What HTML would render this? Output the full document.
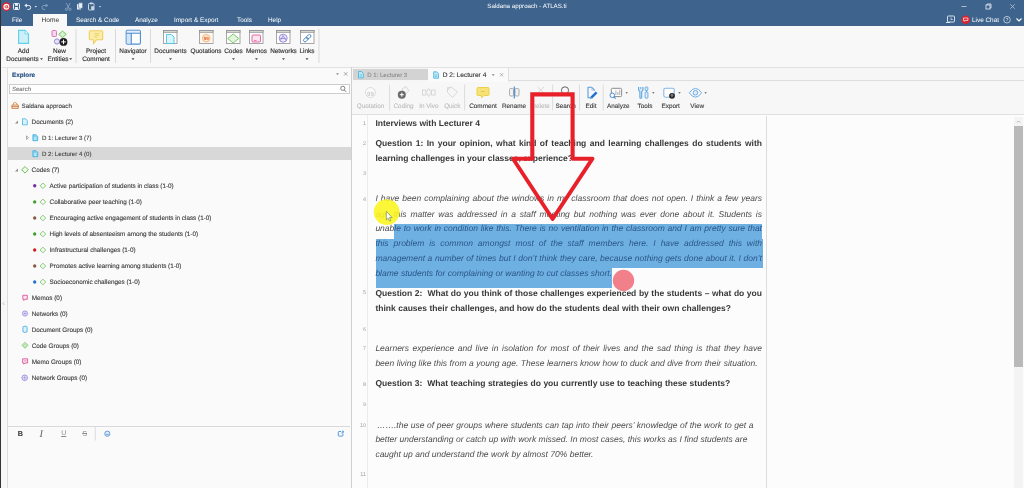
<!DOCTYPE html>
<html>
<head>
<meta charset="utf-8">
<title>Saldana approach - ATLAS.ti</title>
<style>
html,body{margin:0;padding:0;}
body{will-change:transform;text-rendering:geometricPrecision;width:1024px;height:488px;overflow:hidden;position:relative;background:#f7f7f7;font-family:"Liberation Sans",sans-serif;font-size:7px;color:#333;}
.abs{position:absolute;}
.t{position:absolute;white-space:nowrap;line-height:10px;margin-top:1.1px;}
#titlebar{left:0;top:0;width:1024px;height:26px;background:#3e648e;}
#leftedge{left:0;top:0;width:1.3px;height:488px;background:#333;}
.tab{color:#fff;font-size:6.4px;top:14.9px;}
#hometab{left:33px;top:14px;width:34px;height:13px;background:#f8f8f8;}
#ribbon{left:2px;top:26px;width:1022px;height:41px;background:#f8f8f8;border-bottom:1px solid #e2e2e2;}
.rl{-webkit-text-stroke:0.15px #333;font-size:6.4px;color:#333;text-align:center;line-height:8px;}
.vsep{position:absolute;width:1px;background:#d8d8d8;}
/* left panel */
#lp{left:7px;top:68px;width:344px;height:420px;background:#fafafa;border-left:1px solid #dcdcdc;}
.tr{-webkit-text-stroke:0.12px;position:absolute;margin-top:1.1px;font-size:6.35px;color:#444;white-space:nowrap;line-height:10px;}
/* doc */
#dp{left:352px;top:68px;width:672px;height:420px;background:#f6f6f6;}
.dl{position:absolute;font-size:8.5px;line-height:12px;height:12px;color:#333;white-space:nowrap;text-align:justify;text-align-last:justify;}
.dl.b{font-weight:bold;color:#383838;}
.dl.i{font-style:italic;color:#4d4d4d;}
.dl.s,.dl .s{color:#2a5589;}
.ln{position:absolute;margin-top:1.2px;left:353px;width:13px;text-align:right;font-size:5.5px;color:#a2a2a2;line-height:8px;height:8px;}
</style>
</head>
<body>
<div class="abs" id="titlebar"></div>
<div class="abs" id="hometab"></div>
<div class="abs" id="ribbon"></div>
<div class="abs" id="lp"></div>
<div class="abs" id="dp"></div>

<!-- title bar content -->
<svg class="abs" style="left:0.3px;top:1px" width="120" height="14" viewBox="0 0 120 14">
  <circle cx="6.400" cy="5.700" r="3.700" fill="#fff" stroke="#de1f2d" stroke-width="1.400"/>
  <circle cx="6.200" cy="5.800" r="1.150" fill="none" stroke="#de1f2d" stroke-width="0.800"/>
  <path d="M7.500 4.400v2.300q0.500 0.600 1.100 0" fill="none" stroke="#de1f2d" stroke-width="0.700"/>
  <!-- save -->
  <rect x="13.5" y="2.5" width="6" height="6" rx="0.8" fill="none" stroke="#e8eef5" stroke-width="1"/>
  <rect x="15" y="2.8" width="3" height="2" fill="#e8eef5"/>
  <rect x="15" y="6" width="3" height="2.4" fill="#e8eef5"/>
  <!-- undo -->
  <path d="M25.5 4.5h3.2a2 2 0 0 1 0 4h-1.2" fill="none" stroke="#e8eef5" stroke-width="1"/>
  <path d="M24.3 4.5l2.6-2v4z" fill="#e8eef5"/>
  <path d="M34.5 5l1.3 1.4 1.3-1.4z" fill="#dfe6ef"/>
  <!-- redo (dim) -->
  <path d="M47 4.5h-3a2 2 0 0 0 0 4h1.2" fill="none" stroke="#7f9cbd" stroke-width="1"/>
  <path d="M48.3 4.5l-2.6-2v4z" fill="#7f9cbd"/>
  <!-- cut (dim) -->
  <g transform="translate(0.700,0)"><path d="M65.5 2l3 5.5M69.5 2l-3 5.5" stroke="#8ea8c6" stroke-width="0.8" fill="none"/>
  <circle cx="65.7" cy="8.3" r="1.1" fill="none" stroke="#8ea8c6" stroke-width="0.8"/>
  <circle cx="69.3" cy="8.3" r="1.1" fill="none" stroke="#8ea8c6" stroke-width="0.8"/></g>
  <!-- copy -->
  <rect x="77" y="3" width="4" height="5.5" rx="0.6" fill="#e8eef5"/>
  <rect x="78.6" y="1.8" width="4" height="5.5" rx="0.6" fill="#e8eef5" stroke="#3e648e" stroke-width="0.5"/>
  <!-- paste -->
  <rect x="88.5" y="2.5" width="5.5" height="6.5" rx="0.8" fill="none" stroke="#cfd9e6" stroke-width="1"/>
  <rect x="90" y="1.5" width="2.5" height="1.8" fill="#cfd9e6"/>
  <rect x="91" y="5" width="3.5" height="4.2" fill="#cfd9e6" stroke="#3e648e" stroke-width="0.4"/>
  <path d="M98.7 5l1.3 1.4 1.3-1.4z" fill="#b9c8da"/>
</svg>
<div class="t" style="left:427px;width:200px;text-align:center;top:1.2px;color:#fff;font-size:6.2px;">Saldana approach - ATLAS.ti</div>
<svg class="abs" style="left:940px;top:0" width="84" height="26" viewBox="0 0 84 26">
  <path d="M21.5 6.5h5" stroke="#c9d5e3" stroke-width="0.8"/>
  <rect x="46" y="5" width="4" height="4" fill="none" stroke="#e8eef5" stroke-width="0.8"/>
  <path d="M47 5v-1h4v4h-1" fill="none" stroke="#e8eef5" stroke-width="0.8"/>
  <path d="M70.3 4.3l4.4 4.4M74.7 4.3l-4.4 4.4" stroke="#b9c8da" stroke-width="0.8"/>
  <!-- row 2 -->
  <rect x="7.5" y="16" width="7" height="6" rx="0.8" fill="none" stroke="#e8eef5" stroke-width="0.9"/>
  <path d="M11 17.5v2h1.8" fill="none" stroke="#e8eef5" stroke-width="0.7"/>
  <path d="M6 22.5h4" stroke="#e8eef5" stroke-width="0.9"/>
  <circle cx="25.7" cy="19.7" r="4.3" fill="#d8232e"/>
  <path d="M23.5 18h4.4v2.4h-2.6l-0.9 1v-1h-0.9z" fill="none" stroke="#fff" stroke-width="0.7"/>
  <circle cx="67" cy="19.7" r="3.3" fill="none" stroke="#dfe7f0" stroke-width="0.7"/>
  <path d="M66 18.7q1-1.2 2 0q0 .8-1 1.3v0.6" fill="none" stroke="#dfe7f0" stroke-width="0.6"/>
  <path d="M76.5 18.5l2.5 2.5 2.5-2.5" fill="none" stroke="#fff" stroke-width="1.1"/>
</svg>
<div class="t" style="left:972px;top:15px;color:#fff;font-size:6.4px;">Live Chat</div>
<div class="t tab" style="left:12px;">File</div>
<div class="t tab" style="left:41.500px;color:#333;font-size:6.600px;">Home</div>
<div class="t tab" style="left:76px;">Search &amp; Code</div>
<div class="t tab" style="left:135px;">Analyze</div>
<div class="t tab" style="left:174px;">Import &amp; Export</div>
<div class="t tab" style="left:237px;">Tools</div>
<div class="t tab" style="left:268px;">Help</div>
<!-- ribbon content -->
<svg class="abs" style="left:0;top:0" width="330" height="66" viewBox="0 0 330 66">
<path d="M18.600 30.400h6.400l3.500 3.500v9.500h-9.900z" fill="#cdf0f8" stroke="#62d0e8" stroke-width="1.200" stroke-linejoin="round"/><path d="M25 30.400v3.500h3.500" fill="#e8f9fc" stroke="#62d0e8" stroke-width="0.800"/><rect x="52" y="30.5" width="4.5" height="6" rx="1" fill="#f6d8ec" stroke="#d66bb4" stroke-width="0.9"/><path d="M62.5 31l3.8 3.3-3.8 3.3-3.8-3.3z" fill="#d9f0d0" stroke="#6cbf5a" stroke-width="0.9"/><circle cx="57" cy="41.5" r="2.6" fill="#e6e0f7" stroke="#8f7fd6" stroke-width="0.9"/><circle cx="63.500" cy="41.900" r="3.900" fill="#1e1e1e"/><path d="M61.200 41.900h4.600M63.500 39.600v4.600" stroke="#fff" stroke-width="1"/><path d="M90.300 30.800h11.400a1 1 0 0 1 1 1v7a1 1 0 0 1-1 1h-5.200l-3 3.600v-3.600h-3.200a1 1 0 0 1-1-1v-7a1 1 0 0 1 1-1z" fill="#faedaa" stroke="#f0d060" stroke-width="1.100"/><path d="M94.500 33.500h4.500M94.500 35.300h4.500M94.500 37.100h2.800" stroke="#ecc840" stroke-width="0.700"/><rect x="126.200" y="30.300" width="14.200" height="13.800" rx="1.200" fill="#fff" stroke="#4f8dcf" stroke-width="1.100"/><rect x="126.800" y="33.300" width="4.200" height="10.300" fill="#d3e5f6"/><rect x="126.800" y="30.900" width="13" height="2" fill="#e3eefa"/><path d="M126.200 33.300h14.200M131.300 33.300v10.800" stroke="#4f8dcf" stroke-width="1.100"/><g transform="translate(163,30)"><rect x="0.5" y="0.5" width="13.5" height="13" fill="#fff" stroke="#9c9c9c" stroke-width="0.9"/><rect x="0.5" y="0.5" width="13.5" height="1.8" fill="#dcdcdc" stroke="#909090" stroke-width="0.8"/><path d="M3.5 4.500h5l2.500 2.500v6.500h-7.500z" fill="#d8f3f9" stroke="#4cc3e3" stroke-width="0.9"/></g><g transform="translate(199,30)"><rect x="0.5" y="0.5" width="13.5" height="13" fill="#fff" stroke="#9c9c9c" stroke-width="0.9"/><rect x="0.5" y="0.5" width="13.5" height="1.8" fill="#dcdcdc" stroke="#909090" stroke-width="0.8"/><rect x="1" y="3" width="12.500" height="10" fill="#fdf6ef"/><circle cx="7.200" cy="8.200" r="3.700" fill="#fdecd9" stroke="#f5a45e" stroke-width="0.800"/><text x="7.200" y="10" font-size="4.600" font-weight="bold" text-anchor="middle" fill="#e8622a" font-family="Liberation Sans, sans-serif">99</text></g><g transform="translate(226,30)"><rect x="0.5" y="0.5" width="13.5" height="13" fill="#fff" stroke="#9c9c9c" stroke-width="0.9"/><rect x="0.5" y="0.5" width="13.5" height="1.8" fill="#dcdcdc" stroke="#909090" stroke-width="0.8"/><path d="M7.200 4l5.500 4.500-5.500 4.500-5.500-4.500z" fill="#e4f4dd" stroke="#6cbf5a" stroke-width="0.9"/></g><g transform="translate(249,30)"><rect x="0.5" y="0.5" width="13.5" height="13" fill="#fff" stroke="#9c9c9c" stroke-width="0.9"/><rect x="0.5" y="0.5" width="13.5" height="1.8" fill="#dcdcdc" stroke="#909090" stroke-width="0.8"/><rect x="3" y="5" width="8.500" height="7" rx="1" fill="#fbe3ef" stroke="#e2589a" stroke-width="0.9"/><path d="M5 10.500h2.500" stroke="#e2589a" stroke-width="0.7"/></g><g transform="translate(276,30)"><rect x="0.5" y="0.5" width="13.5" height="13" fill="#fff" stroke="#9c9c9c" stroke-width="0.9"/><rect x="0.5" y="0.5" width="13.5" height="1.8" fill="#dcdcdc" stroke="#909090" stroke-width="0.8"/><circle cx="7.200" cy="8.200" r="4" fill="#efeafb" stroke="#7f74d6" stroke-width="0.8"/><path d="M4.500 10.500l2.500-5 3 5M4 8.500h6" stroke="#7f74d6" stroke-width="0.7" fill="none"/></g><g transform="translate(300,30)"><rect x="0.5" y="0.5" width="13.5" height="13" fill="#fff" stroke="#9c9c9c" stroke-width="0.9"/><rect x="0.5" y="0.5" width="13.5" height="1.8" fill="#dcdcdc" stroke="#909090" stroke-width="0.8"/><g transform="rotate(-45 7.200 8.200)" fill="none" stroke="#3f7fc4" stroke-width="0.900"><rect x="2.600" y="6.700" width="5.200" height="3" rx="1.500"/><rect x="6.600" y="6.700" width="5.200" height="3" rx="1.500"/></g></g><path d="M40 58.2h3l-1.500 1.800z" fill="#444"/><path d="M69.200 58.200h3l-1.500 1.800z" fill="#444"/><path d="M131.5 58.2h3l-1.5 1.8z" fill="#444"/><path d="M169.0 58.2h3l-1.5 1.8z" fill="#444"/><path d="M232.0 58.2h3l-1.5 1.8z" fill="#444"/><path d="M255.0 58.2h3l-1.5 1.8z" fill="#444"/><path d="M282.0 58.2h3l-1.5 1.8z" fill="#444"/><path d="M305.5 58.2h3l-1.5 1.8z" fill="#444"/><path d="M76 29v34" stroke="#d9d9d9" stroke-width="1"/><path d="M115.5 29v34" stroke="#d9d9d9" stroke-width="1"/><path d="M150.5 29v34" stroke="#d9d9d9" stroke-width="1"/><path d="M319 29v34" stroke="#d9d9d9" stroke-width="1"/></svg>
<div class="t rl" style="left:-6.5px;width:60px;top:46.7px;">Add</div>
<div class="t rl" style="left:-7.5px;width:60px;top:54.5px;">Documents</div>
<div class="t rl" style="left:29.5px;width:60px;top:46.7px;">New</div>
<div class="t rl" style="left:28.0px;width:60px;top:54.5px;">Entities</div>
<div class="t rl" style="left:66.0px;width:60px;top:46.7px;">Project</div>
<div class="t rl" style="left:66.0px;width:60px;top:54.5px;">Comment</div>
<div class="t rl" style="left:103.0px;width:60px;top:46.7px;">Navigator</div>
<div class="t rl" style="left:140.5px;width:60px;top:46.7px;">Documents</div>
<div class="t rl" style="left:176.0px;width:60px;top:46.7px;">Quotations</div>
<div class="t rl" style="left:203.5px;width:60px;top:46.7px;">Codes</div>
<div class="t rl" style="left:226.5px;width:60px;top:46.7px;">Memos</div>
<div class="t rl" style="left:253.5px;width:60px;top:46.7px;">Networks</div>
<div class="t rl" style="left:277.0px;width:60px;top:46.7px;">Links</div>
<!-- left panel content -->
<div class="abs" style="left:8px;top:147px;width:343px;height:13px;background:#d8d8d8;"></div>
<div class="tr" style="left:12px;top:70px;color:#1f4a80;font-weight:bold;font-size:6.3px;">Explore</div>
<div class="abs" style="left:9px;top:84px;width:340.5px;height:10px;background:#fff;border:1px solid #cdcdcd;box-sizing:border-box;"></div>
<div class="tr" style="left:12px;top:83.5px;color:#777;font-style:italic;font-size:6px;">Search</div>
<div class="tr" style="left:21.6px;top:101px;color:#444;font-size:6.2px;">Saldana approach</div>
<div class="tr" style="left:31.6px;top:117.3px;color:#3a3a3a;">Documents (2)</div>
<div class="tr" style="left:42px;top:133.2px;color:#444;font-size:6.1px;">D 1: Lecturer 3 (7)</div>
<div class="tr" style="left:42px;top:149.2px;color:#444;font-size:6.1px;">D 2: Lecturer 4 (0)</div>
<div class="tr" style="left:31.6px;top:165.2px;color:#3a3a3a;">Codes (7)</div>
<div class="tr" style="left:49.6px;top:181.3px;color:#3a3a3a;">Active participation of students in class (1-0)</div>
<div class="tr" style="left:49.6px;top:197.4px;color:#3a3a3a;">Collaborative peer teaching (1-0)</div>
<div class="tr" style="left:49.6px;top:212.9px;color:#3a3a3a;">Encouraging active engagement of students in class (1-0)</div>
<div class="tr" style="left:49.6px;top:228.9px;color:#3a3a3a;">High levels of absenteeism among the students (1-0)</div>
<div class="tr" style="left:49.6px;top:244.9px;color:#3a3a3a;">Infrastructural challenges (1-0)</div>
<div class="tr" style="left:49.6px;top:260.9px;color:#3a3a3a;">Promotes active learning among students (1-0)</div>
<div class="tr" style="left:49.6px;top:276.9px;color:#3a3a3a;">Socioeconomic challenges (1-0)</div>
<div class="tr" style="left:31.7px;top:292.9px;color:#3a3a3a;">Memos (0)</div>
<div class="tr" style="left:31.7px;top:308.9px;color:#3a3a3a;">Networks (0)</div>
<div class="tr" style="left:31.7px;top:325px;color:#3a3a3a;">Document Groups (0)</div>
<div class="tr" style="left:31.7px;top:340.7px;color:#3a3a3a;">Code Groups (0)</div>
<div class="tr" style="left:31.7px;top:356.9px;color:#3a3a3a;">Memo Groups (0)</div>
<div class="tr" style="left:31.7px;top:373.3px;color:#3a3a3a;">Network Groups (0)</div>
<svg class="abs" style="left:0;top:66px" width="352" height="422" viewBox="0 66 352 422">
<path d="M336 73.300h3l-1.500 1.800z" fill="#888"/><path d="M344 72.200l3.400 3.400M347.400 72.200l-3.400 3.400" stroke="#888" stroke-width="0.700"/><circle cx="342.800" cy="88.300" r="2.100" fill="none" stroke="#666" stroke-width="0.800"/><path d="M344.300 89.900l1.900 2" stroke="#666" stroke-width="0.900"/><g transform="translate(2.100,-0.500)"><path d="M9.800 105.500h6.400v3.500h-6.400z" fill="#f9ead0" stroke="#c9803a" stroke-width="0.800"/><path d="M11 105.500a2 2.500 0 0 1 4 0" fill="none" stroke="#c9803a" stroke-width="0.800"/><path d="M9.500 107.200h7" stroke="#c0503a" stroke-width="0.700"/></g><path d="M18.0 120.5v3h-3z" fill="#8c8c8c"/><path d="M22.5 118.8h3l1.800 1.800v4.200h-4.800z" fill="#d8f3f9" stroke="#3fb4dc" stroke-width="0.800"/><path d="M26.5 135.89999999999998l2 1.800-2 1.800z" fill="none" stroke="#777" stroke-width="0.600"/><path d="M32.900000000000006 134.7h3l1.800 1.800v4.200h-4.800z" fill="#86d3ef" stroke="#35b0dd" stroke-width="0.800"/><path d="M33.9 137.9h2.600M33.9 139.3h2.600" stroke="#fff" stroke-width="0.600"/><path d="M32.900000000000006 150.7h3l1.800 1.800v4.200h-4.800z" fill="#86d3ef" stroke="#35b0dd" stroke-width="0.800"/><path d="M33.9 153.9h2.600M33.9 155.3h2.600" stroke="#fff" stroke-width="0.600"/><path d="M18.0 168.5v3h-3z" fill="#8c8c8c"/><path d="M25 166.500l3.300 3.300-3.300 3.300-3.300-3.300z" fill="#f1faec" stroke="#6cbf5a" stroke-width="1" stroke-linejoin="round"/><circle cx="34.700" cy="185.8" r="1.700" fill="#7b2fa0"/><path d="M42.9 183.0l2.800 2.800-2.800 2.800-2.800-2.800z" fill="#f1faec" stroke="#6cbf5a" stroke-width="0.800"/><circle cx="34.700" cy="201.9" r="1.700" fill="#3f9e2f"/><path d="M42.9 199.1l2.800 2.800-2.800 2.800-2.800-2.800z" fill="#f1faec" stroke="#6cbf5a" stroke-width="0.800"/><circle cx="34.700" cy="218" r="1.700" fill="#8a5a44"/><path d="M42.9 215.2l2.800 2.800-2.800 2.800-2.800-2.800z" fill="#f1faec" stroke="#6cbf5a" stroke-width="0.800"/><circle cx="34.700" cy="234" r="1.700" fill="#3f9e2f"/><path d="M42.9 231.2l2.800 2.800-2.800 2.800-2.800-2.800z" fill="#f1faec" stroke="#6cbf5a" stroke-width="0.800"/><circle cx="34.700" cy="250" r="1.700" fill="#cc1f1f"/><path d="M42.9 247.2l2.800 2.800-2.800 2.800-2.800-2.800z" fill="#f1faec" stroke="#6cbf5a" stroke-width="0.800"/><circle cx="34.700" cy="266" r="1.700" fill="#8a5a44"/><path d="M42.9 263.2l2.800 2.800-2.800 2.800-2.800-2.800z" fill="#f1faec" stroke="#6cbf5a" stroke-width="0.800"/><circle cx="34.700" cy="282" r="1.700" fill="#2a6fd6"/><path d="M42.9 279.2l2.800 2.800-2.800 2.800-2.800-2.800z" fill="#f1faec" stroke="#6cbf5a" stroke-width="0.800"/><g transform="translate(0.300,-0.700)"><path d="M22.500 295.500h4.500v4h-2.500l-1 1.200v-1.200h-1z" fill="#fbe3ef" stroke="#d6478f" stroke-width="0.800" transform="translate(0,0.500)"/><circle cx="24.700" cy="314.200" r="2.600" fill="#efeafb" stroke="#7f74d6" stroke-width="0.700"/><path d="M23 314.200h3.400M24.700 312.500v3.400" stroke="#7f74d6" stroke-width="0.500"/><rect x="22.600" y="327" width="4.200" height="6" rx="1.200" fill="#d8f3f9" stroke="#3fa4dc" stroke-width="0.800"/><path d="M24.700 343l3 3-3 3-3-3z" fill="#e4f4dd" stroke="#6cbf5a" stroke-width="0.800"/><path d="M24.700 344.500l1.500 1.500-1.500 1.500-1.500-1.500z" fill="none" stroke="#6cbf5a" stroke-width="0.500"/><path d="M22.300 359.500h5v4.200h-2.800l-1 1.200v-1.200h-1.200z" fill="#fbe3ef" stroke="#d6478f" stroke-width="0.800"/><path d="M24 361.500h2" stroke="#d6478f" stroke-width="0.600"/></g><circle cx="24.700" cy="377.800" r="2.800" fill="#efeafb" stroke="#7f74d6" stroke-width="0.700"/><path d="M22.500 377.800h4.400M24.700 375.500v4.500" stroke="#7f74d6" stroke-width="0.500"/><path d="M8 426.500h342" stroke="#d9d9d9" stroke-width="1"/><path d="M95.300 427v13.500" stroke="#dcdcdc" stroke-width="1"/><circle cx="107.300" cy="433.700" r="2.600" fill="#dfeaf8" stroke="#5a98d8" stroke-width="0.900"/><path d="M105.900 434.400h2.800" stroke="#5a98d8" stroke-width="0.800"/><rect x="338.300" y="431.500" width="4.600" height="4.600" rx="0.800" fill="none" stroke="#2f7fd0" stroke-width="0.800"/><path d="M341 431.200h2.300v2.300" fill="none" stroke="#fafafa" stroke-width="1.600"/><path d="M341.200 433.500l2-2M341.800 431.200h1.600v1.600" fill="none" stroke="#2f7fd0" stroke-width="0.700"/><path d="M4.300 302.300l-1.300 1.300 1.300 1.300" fill="none" stroke="#999" stroke-width="0.600"/></svg>
<div class="tr" style="left:17.800px;top:428px;font-weight:bold;color:#3a3a3a;font-size:7.200px;">B</div>
<div class="tr" style="left:39.500px;top:429.400px;font-style:italic;color:#666;font-size:10.500px;font-family:'Liberation Serif',serif;-webkit-text-stroke:0;">I</div>
<div class="tr" style="left:61.200px;top:428px;text-decoration:underline;color:#8a8a8a;font-size:7px;-webkit-text-stroke:0;">U</div>
<div class="tr" style="left:82.200px;top:428px;text-decoration:line-through;color:#8a8a8a;font-size:7.200px;-webkit-text-stroke:0;">S</div>
<!-- document panel -->
<div class="abs" style="left:352.6px;top:69.3px;width:75px;height:11px;background:#d3d3d3;"></div>
<div class="abs" style="left:427.6px;top:68px;width:80.4px;height:14px;background:#fafafa;border-right:1px solid #dedede;"></div>
<div class="abs" style="left:509px;top:80px;width:515px;height:1px;background:#dedede;"></div>
<div class="abs" style="left:352px;top:82px;width:672px;height:32px;background:#f7f7f7;"></div>

<div class="abs" style="left:352px;top:114px;width:672px;height:374px;background:#fcfcfc;border-top:1px solid #e1e1e1;"></div>
<div class="abs" style="left:351.2px;top:67px;width:1px;height:421px;background:#cfcfcf;"></div>
<div class="abs" style="left:367px;top:115px;width:1px;height:373px;background:#ececec;"></div>
<div class="abs" style="left:766px;top:116px;width:1px;height:372px;background:#dcdcdc;"></div>
<div class="abs" style="left:1014px;top:117px;width:9px;height:371px;background:#f4f4f4;"></div>
<div class="abs" style="left:1014px;top:126px;width:8.5px;height:241px;background:#b9b9b9;"></div>
<svg class="abs" style="left:1014px;top:117px" width="9" height="9"><path d="M3 5.500l1.500-1.500 1.500 1.500" fill="none" stroke="#999" stroke-width="0.700"/></svg>
<div class="abs" style="left:394.3px;top:223.8px;width:368.2px;height:15px;background:#6fb0e2;"></div>
<div class="abs" style="left:375.5px;top:238.5px;width:387px;height:29px;background:#6fb0e2;"></div>
<div class="abs" style="left:375.5px;top:267px;width:236.3px;height:21.3px;background:#6fb0e2;"></div>
<div class="dl b" style="left:375.4px;width:104.6px;top:117.2px;">Interviews with Lecturer 4</div>
<div class="dl b" style="left:375.4px;width:386.6px;top:137.4px;">Question 1: In your opinion, what kind of teaching and learning challenges do students with</div>
<div class="dl b" style="left:375.4px;width:196.8px;top:151.6px;">learning challenges in your classes, experience?</div>
<div class="dl i" style="left:375.4px;width:386.6px;top:192.4px;">I have been complaining about the windows in my classroom that does not open. I think a few years</div>
<div class="dl i" style="left:375.4px;width:386.6px;top:207.7px;">ago this matter was addressed in a staff meeting but nothing was ever done about it. Students is</div>
<div class="dl i" style="left:375.4px;width:386.6px;top:222.4px;">unab<span class="s">le to work in condition like this. There is no ventilation in the classroom and I am pretty sure that</span></div>
<div class="dl i s" style="left:375.4px;width:386.6px;top:237.2px;">this problem is common amongst most of the staff members here. I have addressed this with</div>
<div class="dl i s" style="left:375.4px;width:386.6px;top:251.9px;">management a number of times but I don&rsquo;t think they care, because nothing gets done about it. I don&rsquo;t</div>
<div class="dl i s" style="left:375.4px;width:235.6px;top:266.7px;">blame students for complaining or wanting to cut classes short.</div>
<div class="dl b" style="left:375.4px;width:386.6px;top:286.7px;">Question 2:&nbsp; What do you think of those challenges experienced by the students &ndash; what do you</div>
<div class="dl b" style="left:375.4px;width:355.6px;top:302.2px;">think causes their challenges, and how do the students deal with their own challenges?</div>
<div class="dl i" style="left:375.4px;width:386.6px;top:342.1px;">Learners experience and live in isolation for most of their lives and the sad thing is that they have</div>
<div class="dl i" style="left:375.4px;width:382.3px;top:356.7px;">been living like this from a young age. These learners know how to duck and dive from their situation.</div>
<div class="dl b" style="left:375.4px;width:354.8px;top:377.4px;">Question 3:&nbsp; What teaching strategies do you currently use to teaching these students?</div>
<div class="dl i" style="left:377px;width:376.4px;top:419.1px;">&hellip;&hellip;.the use of peer groups where students can tap into their peers&rsquo; knowledge of the work to get a</div>
<div class="dl i" style="left:375.4px;width:372.0px;top:433.2px;">better understanding or catch up with work missed. In most cases, this works as I find students are</div>
<div class="dl i" style="left:375.4px;width:218.1px;top:447.8px;">caught up and understand the work by almost 70% better.</div>
<div class="ln" style="top:118.6px;">1</div>
<div class="ln" style="top:138.8px;">2</div>
<div class="ln" style="top:168.6px;">3</div>
<div class="ln" style="top:194.6px;">4</div>
<div class="ln" style="top:287.5px;">5</div>
<div class="ln" style="top:324.6px;">6</div>
<div class="ln" style="top:344.3px;">7</div>
<div class="ln" style="top:379.6px;">8</div>
<div class="ln" style="top:400.2px;">9</div>
<div class="ln" style="top:421.3px;">10</div>
<div class="ln" style="top:470.2px;">11</div>
<!-- doc tabs + toolbar -->
<div class="tr" style="left:367.2px;top:70.3px;color:#8c8c8c;font-size:6.05px;">D 1: Lecturer 3</div>
<div class="tr" style="left:442.7px;top:70.3px;color:#333;font-size:6.6px;">D 2: Lecturer 4</div>
<div class="tr" style="left:340.55px;width:60px;text-align:center;top:100.5px;color:#bdbdbd;">Quotation</div>
<div class="tr" style="left:373.6px;width:60px;text-align:center;top:100.5px;color:#bdbdbd;">Coding</div>
<div class="tr" style="left:398.85px;width:60px;text-align:center;top:100.5px;color:#bdbdbd;">In Vivo</div>
<div class="tr" style="left:422.25px;width:60px;text-align:center;top:100.5px;color:#bdbdbd;">Quick</div>
<div class="tr" style="left:453.0px;width:60px;text-align:center;top:100.5px;color:#3a3a3a;">Comment</div>
<div class="tr" style="left:484.0px;width:60px;text-align:center;top:100.5px;color:#3a3a3a;">Rename</div>
<div class="tr" style="left:510.6px;width:60px;text-align:center;top:100.5px;color:#bdbdbd;">Delete</div>
<div class="tr" style="left:535.65px;width:60px;text-align:center;top:100.5px;color:#3a3a3a;">Search</div>
<div class="tr" style="left:561.05px;width:60px;text-align:center;top:100.5px;color:#3a3a3a;">Edit</div>
<div class="tr" style="left:588.35px;width:60px;text-align:center;top:100.5px;color:#3a3a3a;">Analyze</div>
<div class="tr" style="left:614.95px;width:60px;text-align:center;top:100.5px;color:#3a3a3a;">Tools</div>
<div class="tr" style="left:640.7px;width:60px;text-align:center;top:100.5px;color:#3a3a3a;">Export</div>
<div class="tr" style="left:667.2px;width:60px;text-align:center;top:100.5px;color:#3a3a3a;">View</div>
<svg class="abs" style="left:352px;top:66px" width="372" height="50" viewBox="352 66 372 50">
<path d="M358.5 71.5h3l1.800 1.800v4.600h-4.800z" fill="#bfe6f5" stroke="#3fb4dc" stroke-width="0.800"/><path d="M359.6 74.7h2.400M359.6 76.2h2.400" stroke="#3fb4dc" stroke-width="0.500"/><path d="M433.7 71.8h3l1.800 1.800v4.600h-4.800z" fill="#bfe6f5" stroke="#3fb4dc" stroke-width="0.800"/><path d="M434.8 75h2.400M434.8 76.5h2.400" stroke="#3fb4dc" stroke-width="0.500"/><path d="M491.700 74.300h3l-1.500 1.800z" fill="#888"/><path d="M500 73.200l3.200 3.200M503.200 73.200l-3.200 3.200" stroke="#999" stroke-width="0.700"/><path d="M389.6 84.500v26" stroke="#dcdcdc" stroke-width="1"/><path d="M464.6 84.500v26" stroke="#dcdcdc" stroke-width="1"/><path d="M552.6 84.500v26" stroke="#dcdcdc" stroke-width="1"/><path d="M579.5 84.500v26" stroke="#dcdcdc" stroke-width="1"/><path d="M603.2 84.500v26" stroke="#dcdcdc" stroke-width="1"/><circle cx="370.400" cy="92.500" r="5" fill="#fafafa" stroke="#d4d4d4" stroke-width="0.800"/><text x="370.400" y="95.500" font-size="6" font-weight="bold" text-anchor="middle" fill="#cfcfcf" font-family="Liberation Sans, sans-serif">99</text><path d="M402 89l4-2.500 3 4-4.500 4.500z" fill="#f4f4f4" stroke="#cfcfcf" stroke-width="0.800"/><circle cx="401.800" cy="94.700" r="4" fill="#6a6a6a"/><path d="M399.800 94.700h4M401.800 92.700v4" stroke="#fff" stroke-width="1"/><rect x="422.500" y="90" width="3.500" height="5" fill="none" stroke="#d0d0d0" stroke-width="0.800"/><path d="M428.800 88.500l2.500 4-2.500 4-2.500-4z" fill="#f6f6f6" stroke="#d0d0d0" stroke-width="0.800"/><rect x="431.600" y="90" width="3.500" height="5" fill="none" stroke="#d0d0d0" stroke-width="0.800"/><path d="M447.500 88.500l4-1.500 6 5-5 5.500-5-5z" fill="#f6f6f6" stroke="#d0d0d0" stroke-width="0.800"/><path d="M447 87.500h4M447 89h3" stroke="#d0d0d0" stroke-width="0.600"/><path d="M478 87.500h10a1 1 0 0 1 1 1v6a1 1 0 0 1-1 1h-4l-2.500 2.500v-2.500h-3.500a1 1 0 0 1-1-1v-6a1 1 0 0 1 1-1z" fill="#f7e27a" stroke="#efd04a" stroke-width="1"/><path d="M481 91.500h3.500" stroke="#e6bf2a" stroke-width="0.800"/><rect x="509.500" y="88.500" width="4" height="7.500" rx="1.200" fill="#f1f1f1" stroke="#9a9a9a" stroke-width="0.800"/><rect x="515" y="88.500" width="4" height="7.500" rx="1.200" fill="#f1f1f1" stroke="#9a9a9a" stroke-width="0.800"/><path d="M514.300 86.500v12" stroke="#4a8fd6" stroke-width="1.200"/><path d="M537.500 87l6.500 6M544 87l-6.500 6" stroke="#cfcfcf" stroke-width="0.800"/><circle cx="565" cy="90.400" r="3.600" fill="none" stroke="#555" stroke-width="0.900"/><path d="M567.600 93l2.600 2.800" stroke="#555" stroke-width="1"/><path d="M588 87.300h3.800l2.800 2.800M588 87.300v10.500h3.500" fill="none" stroke="#5a9fe0" stroke-width="1.100" stroke-linejoin="round" stroke-linecap="round"/><path d="M591.800 87.500v2.700h2.700" fill="none" stroke="#8fc0ea" stroke-width="0.700"/><path d="M591.300 97.600l5.300-5.300" stroke="#1f6fd0" stroke-width="2.400" stroke-linecap="butt"/><path d="M589.800 99l0.600-2.200 1.600 1.600z" fill="#5a9fe0"/><rect x="611.300" y="88.300" width="10.300" height="8.300" rx="1" fill="#fdfdfd" stroke="#8c8c8c" stroke-width="1"/><path d="M615.900 95v-4.500M617.900 95v-3M619.700 95v-5.200" stroke="#9a9a9a" stroke-width="0.800"/><circle cx="612.300" cy="95.300" r="2.300" fill="#f4f9fe" stroke="#4a90d6" stroke-width="1"/><path d="M613.900 97l1.700 1.600" stroke="#4a90d6" stroke-width="1.100"/><path d="M638.600 87v2.600a2 2 0 0 0 1.300 1.800v6a0.900 0.900 0 0 0 1.800 0v-6a2 2 0 0 0 1.300-1.800v-2.600" fill="#e6f1fb" stroke="#5aa5e0" stroke-width="1.100" stroke-linejoin="round"/><path d="M640.800 87v2.300" stroke="#5aa5e0" stroke-width="0.900"/><rect x="645.200" y="87" width="2.600" height="3.600" rx="0.500" fill="#e6f1fb" stroke="#5aa5e0" stroke-width="0.900"/><path d="M646.500 90.600v1.400" stroke="#5aa5e0" stroke-width="0.900"/><rect x="645.100" y="92" width="2.800" height="6.200" rx="0.900" fill="#e6f1fb" stroke="#5aa5e0" stroke-width="0.900"/><rect x="663.800" y="88.200" width="10.400" height="9" rx="1.600" fill="#fdfdfd" stroke="#86b8e4" stroke-width="1.100"/><circle cx="672" cy="95.800" r="2.900" fill="#222"/><path d="M672 97.300v-2.800M670.900 95.500l1.100-1.100 1.100 1.100" stroke="#fff" stroke-width="0.600" fill="none"/><path d="M689.300 92.800q6.150-8.800 12.300 0q-6.150 8.800-12.300 0z" fill="#f6fafe" stroke="#6faae0" stroke-width="1"/><circle cx="695.400" cy="92.800" r="2.300" fill="#e3effa" stroke="#6faae0" stroke-width="1"/><path d="M625.5 92.200h2.400l-1.200 1.500z" fill="#555"/><path d="M652.0999999999999 92.200h2.400l-1.200 1.500z" fill="#555"/><path d="M678.3 92.200h2.400l-1.200 1.500z" fill="#555"/><path d="M704.4 92.200h2.400l-1.200 1.500z" fill="#555"/></svg>
<!-- overlays -->
<svg class="abs" style="left:0;top:0" width="1024" height="488" viewBox="0 0 1024 488">
<path d="M532.300 158.700V94.400H572.600V158.700" fill="none" stroke="#e8202a" stroke-width="4.100" stroke-linejoin="miter"/><path d="M532.300 158.700H513L552.600 219L592.500 158.700H572.600" fill="none" stroke="#e8202a" stroke-width="3.900" stroke-linejoin="round" stroke-linecap="round"/><circle cx="386.700" cy="212.100" r="12.900" fill="#fbf522" fill-opacity="0.900"/><path d="M386.300 211.300v8.600l1.900-1.700 1.300 2.900 1.300-0.600-1.300-2.900h2.600z" fill="#fff" stroke="#5f7a3a" stroke-width="0.600"/><circle cx="623.500" cy="280.500" r="10.700" fill="#f2808a"/></svg>
<div class="abs" id="leftedge"></div>
</body>
</html>
